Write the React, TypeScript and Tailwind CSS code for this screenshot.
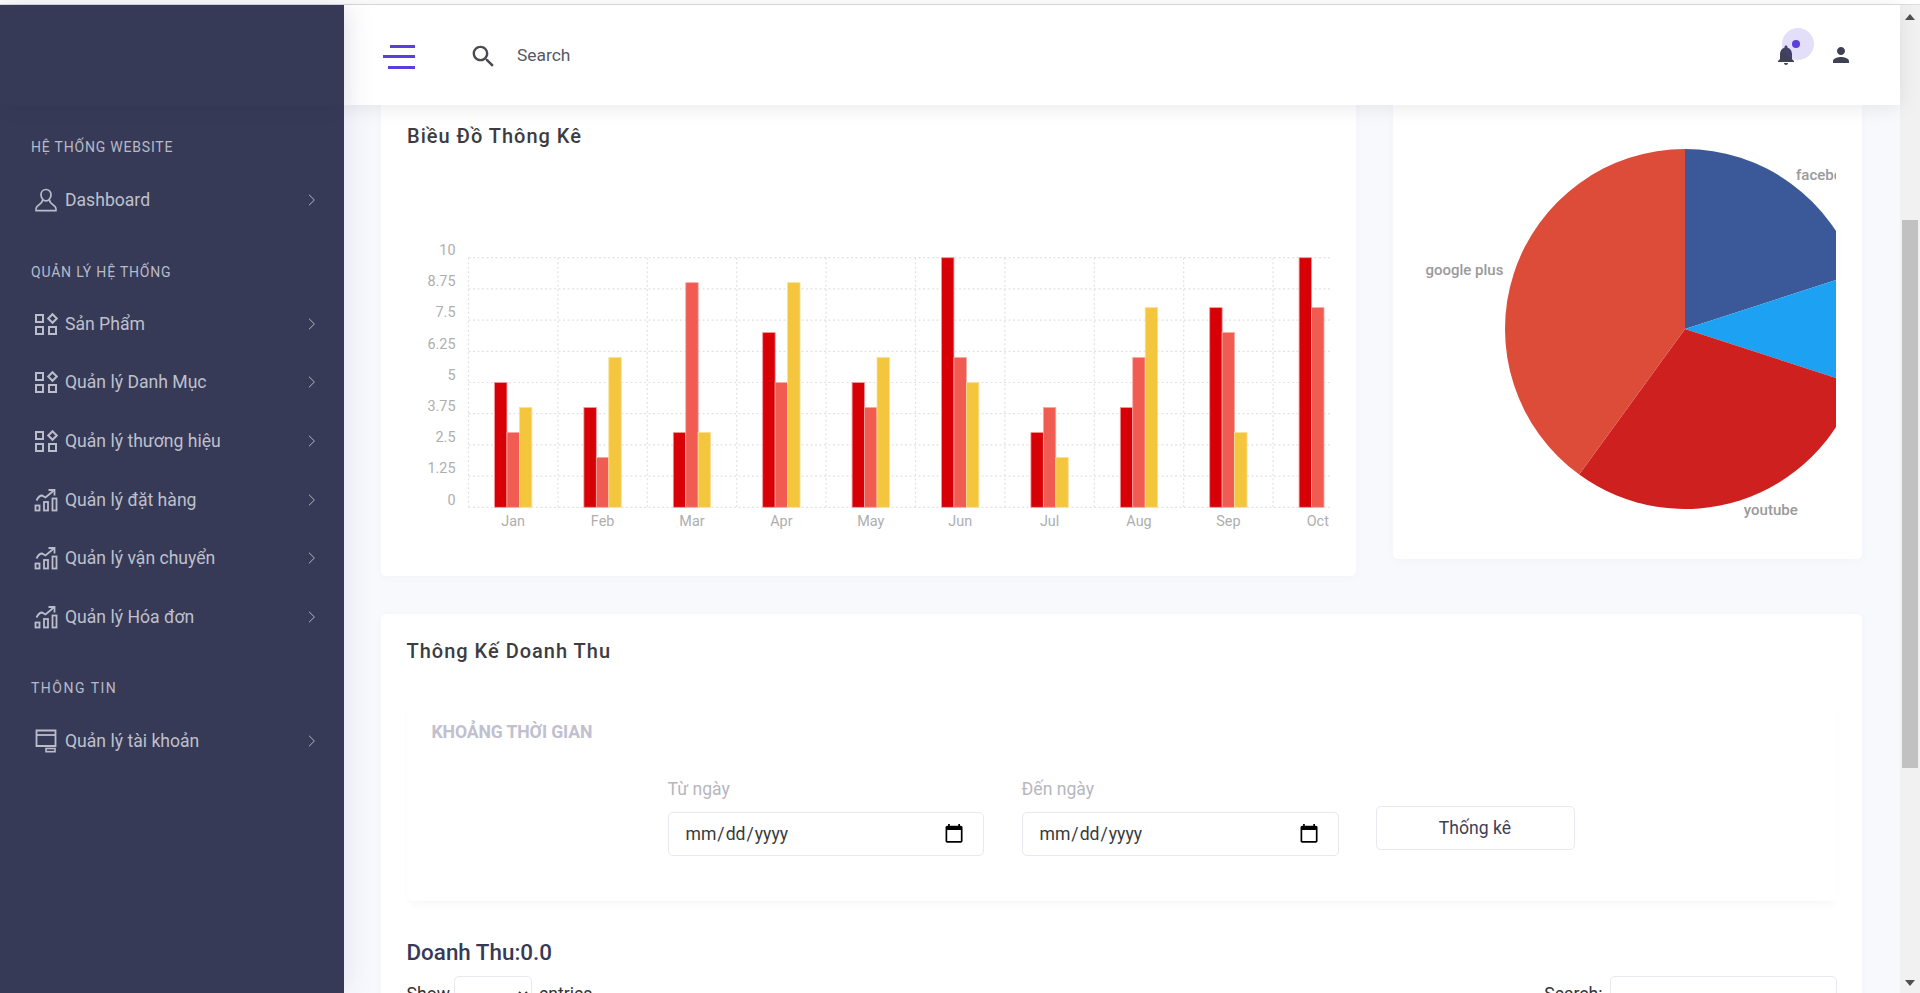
import React from "react";

const Chevron = () => (
  <svg width="8" height="14" viewBox="0 0 8 14" fill="none" stroke="#b4b5c3" strokeWidth="1" className="shrink-0">
    <path d="M1 1.7 L6.4 7 L1 12.3" />
  </svg>
);

const PersonIcon = () => (
  <svg width="24" height="24" viewBox="0 0 24 24" fill="none" stroke="#bcbdca" strokeWidth="1.7">
    <path d="M12 1.5c-3 0-5 2.3-5 5.2 0 3 2.2 6.2 5 6.2s5-3.2 5-6.2c0-2.9-2-5.2-5-5.2z" />
    <path d="M8.6 12 C8.4 15 5 16.5 3 18.5 1.8 20 1.6 21.2 2 22.6 H22 C22.4 21.2 22.2 20 21 18.5 19 16.5 15.6 15 15.4 12" />
  </svg>
);

const GridIcon = () => (
  <svg width="24" height="24" viewBox="0 0 24 24" fill="none" stroke="#bcbdca" strokeWidth="2">
    <rect x="2" y="3" width="7" height="7" />
    <rect x="2" y="15" width="7" height="7" />
    <rect x="15" y="15" width="7" height="7" />
    <path d="M18.5 2.2 L22.8 6.5 L18.5 10.8 L14.2 6.5 Z" />
  </svg>
);

const TrendIcon = () => (
  <svg width="24" height="24" viewBox="0 0 24 24" fill="none" stroke="#bcbdca" strokeWidth="1.8">
    <rect x="1.5" y="17.5" width="4" height="5" />
    <rect x="10" y="14" width="4" height="8.5" />
    <rect x="18.5" y="10.5" width="4" height="12" />
    <path d="M2.5 12.5 C4 9.5 6 7.5 8 7.5 L11.5 9.5 L19.5 2.8" />
    <path d="M14.5 2 H20.5 V7.5" />
  </svg>
);

const WindowIcon = () => (
  <svg width="24" height="24" viewBox="0 0 24 24" fill="none" stroke="#bcbdca" strokeWidth="1.8">
    <path d="M2.5 1.5 H21.5 V17 H2.5 Z" />
    <path d="M2.5 6 H21.5" />
    <rect x="12" y="19.5" width="9" height="3.2" strokeWidth="1.6" />
  </svg>
);

const SectionLabel = ({ text, className }: { text: string; className: string }) => (
  <div className={`h-5 pl-[31px] text-[14px] leading-5 text-[#b9bac7] uppercase ${className}`}>{text}</div>
);

const MenuRow = ({ icon, text }: { icon: React.ReactNode; text: string }) => (
  <div className="flex h-[58.6px] items-center pl-[34px] pr-[28px] text-[#bfc0cc]">
    <div className="flex w-[31px] shrink-0 items-center">{icon}</div>
    <div className="flex-1 text-[17.6px] leading-6">{text}</div>
    <Chevron />
  </div>
);

const Sidebar = () => (
  <aside className="z-20 h-full w-[344px] shrink-0 bg-[#363a57] shadow-[0_0_30px_rgba(60,60,120,0.12)]">
    <div className="h-[100px] shadow-[0_4px_20px_rgba(0,0,0,0.05)]" />
    <SectionLabel text="Hệ thống website" className="mt-[32px] tracking-[0.8px]" />
    <div className="mt-[14px]">
      <MenuRow icon={<PersonIcon />} text="Dashboard" />
    </div>
    <SectionLabel text="Quản lý hệ thống" className="mt-[32px] tracking-[0.8px]" />
    <div className="mt-[13px]">
      <MenuRow icon={<GridIcon />} text="Sản Phẩm" />
      <MenuRow icon={<GridIcon />} text="Quản lý Danh Mục" />
      <MenuRow icon={<GridIcon />} text="Quản lý thương hiệu" />
      <MenuRow icon={<TrendIcon />} text="Quản lý đặt hàng" />
      <MenuRow icon={<TrendIcon />} text="Quản lý vận chuyển" />
      <MenuRow icon={<TrendIcon />} text="Quản lý Hóa đơn" />
    </div>
    <SectionLabel text="Thông tin" className="mt-[32px] tracking-[1.5px]" />
    <div className="mt-[14px]">
      <MenuRow icon={<WindowIcon />} text="Quản lý tài khoản" />
    </div>
  </aside>
);

const Header = () => (
  <header className="z-10 flex h-[100px] shrink-0 items-center bg-white pl-[39px] pr-[47.5px] shadow-[0_2px_20px_rgba(0,0,0,0.09)]">
    <div className="mt-[3px] flex w-[32px] flex-col items-end gap-[7.5px]">
      <div className="h-[3px] w-[25px] bg-[#5a3fdc]" />
      <div className="h-[3px] w-[32px] bg-[#5a3fdc]" />
      <div className="h-[3px] w-[27px] bg-[#5a3fdc]" />
    </div>
    <svg width="29" height="29" viewBox="0 0 24 24" fill="#4a4a50" className="ml-[54px] mt-[3px]">
      <path d="M15.5 14h-.79l-.28-.27C15.41 12.59 16 11.11 16 9.5 16 5.91 13.09 3 9.5 3S3 5.91 3 9.5 5.91 16 9.5 16c1.61 0 3.09-.59 4.23-1.57l.27.28v.79l5 4.99L20.49 19l-4.99-5zm-6 0C7.01 14 5 11.99 5 9.5S7.01 5 9.5 5 14 7.01 14 9.5 11.99 14 9.5 14z" />
    </svg>
    <div className="ml-[19px] mt-[1px] text-[17.4px] text-[#555865]">Search</div>
    <div className="flex-1" />
    <div className="relative h-6 w-6">
      <svg width="24" height="24" viewBox="0 0 24 24" fill="#3f4254">
        <path d="M12 22c1.1 0 2-.9 2-2h-4c0 1.1.89 2 2 2zm6-6v-5c0-3.07-1.64-5.64-4.5-6.32V4c0-.83-.67-1.5-1.5-1.5s-1.5.67-1.5 1.5v.68C7.63 5.36 6 7.92 6 11v5l-2 2v1h16v-1l-2-2z" />
      </svg>
      <div className="absolute left-[8px] top-[-15px] flex h-[32px] w-[32px] items-center justify-center rounded-full bg-[#5a3fdc]/17">
        <div className="ml-[-3px] h-2 w-2 rounded-full bg-[#5a3fdc]" />
      </div>
    </div>
    <svg width="24" height="24" viewBox="0 0 24 24" fill="#3f4254" className="ml-[31px]">
      <path d="M12 12c2.21 0 4-1.79 4-4s-1.79-4-4-4-4 1.79-4 4 1.79 4 4 4zm0 2c-2.67 0-8 1.34-8 4v2h16v-2c0-2.66-5.33-4-8-4z" />
    </svg>
  </header>
);

const months = ["Jan", "Feb", "Mar", "Apr", "May", "Jun", "Jul", "Aug", "Sep", "Oct"];
const series: number[][] = [
  [5, 3, 4], [4, 2, 6], [3, 9, 3], [7, 5, 9], [5, 4, 6],
  [10, 6, 5], [3, 4, 2], [4, 6, 8], [8, 7, 3], [10, 8],
];
const barFill = ["#d60006", "#f15c52", "#f4c63d"];
const barEdge = ["#f49a9c", "#f7a9a4", "#f9e09a"];
const ticks = ["10", "8.75", "7.5", "6.25", "5", "3.75", "2.5", "1.25", "0"];
const X0 = 468.5;
const STEP = 89.4;
const TOP = 257.7;
const BOTTOM = 507.3;
const BAR = 12.45;

const BarChart = () => (
  <svg width="975" height="300" viewBox="381 240 975 300" className="mt-[92px] block" fontFamily="Roboto, sans-serif" fontSize="14.4">
    {ticks.map((t, i) => {
      const y = TOP + (i * (BOTTOM - TOP)) / 8;
      return (
        <g key={t}>
          <line x1={X0} x2={1331} y1={y} y2={y} stroke="#e2e2e2" strokeWidth="1.2" strokeDasharray="2 2.5" />
          <text x={455.5} y={y - 2.7} textAnchor="end" fill="#aeaeae">{t}</text>
        </g>
      );
    })}
    {months.map((m, i) => (
      <line key={m} x1={X0 + i * STEP} x2={X0 + i * STEP} y1={TOP} y2={BOTTOM} stroke="#e2e2e2" strokeWidth="1.2" strokeDasharray="2 2.5" />
    ))}
    {series.map((vals, i) => {
      const start = 494.5 + i * STEP;
      return (
        <g key={months[i]}>
          {vals.map((v, j) => {
            const h = (v / 10) * (BOTTOM - TOP);
            return (
              <rect key={j} x={start + j * BAR} y={BOTTOM - h} width={BAR} height={h} fill={barFill[j]} stroke={barEdge[j]} strokeWidth="0.8" />
            );
          })}
          <text x={start + 18.7} y={526} textAnchor="middle" fill="#aeaeae">{months[i]}</text>
        </g>
      );
    })}
  </svg>
);

const slices = [
  { from: -90, to: -18, fill: "#3b5998" },
  { from: -18, to: 18, fill: "#1da1f2" },
  { from: 18, to: 126, fill: "#cd201f" },
  { from: 126, to: 270, fill: "#dd4b39" },
];
const CX = 1685;
const CY = 329;
const R = 180;
const slicePath = (from: number, to: number) => {
  const a = (from * Math.PI) / 180;
  const b = (to * Math.PI) / 180;
  const large = to - from > 180 ? 1 : 0;
  return `M${CX} ${CY}L${CX + R * Math.cos(a)} ${CY + R * Math.sin(a)}A${R} ${R} 0 ${large} 1 ${CX + R * Math.cos(b)} ${CY + R * Math.sin(b)}Z`;
};

const PieChart = () => (
  <svg width="442.5" height="400" viewBox="1393 130 442.5 400" className="mt-[25px] block" fontFamily="Roboto, sans-serif" fontSize="15" fontWeight="500">
    {slices.map((s) => (
      <path key={s.fill} d={slicePath(s.from, s.to)} fill={s.fill} />
    ))}
    <text x={1796} y={180} fill="#9a9a9a">facebook</text>
    <text x={1425.5} y={275} fill="#9a9a9a">google plus</text>
    <text x={1743.8} y={515} fill="#9a9a9a">youtube</text>
  </svg>
);

const DateField = ({ label, className }: { label: string; className: string }) => (
  <div className={`shrink-0 ${className}`}>
    <div className="h-6 text-[17.6px] leading-6 text-[#b6b7c0]">{label}</div>
    <input
      type="date"
      className="mt-[11px] block h-[44px] w-full rounded-[5px] border border-[#e8e8ee] bg-white px-4 text-[17.6px] text-[#3a3a3a] [&::-webkit-calendar-picker-indicator]:mr-[2px] [&::-webkit-calendar-picker-indicator]:scale-[1.2]"
    />
  </div>
);

const Revenue = () => (
  <section className="mt-[38px] rounded-[5px] bg-white px-[25.5px] pt-[25px] pb-10 shadow-[0_2px_10px_rgba(80,80,140,0.03)]">
    <h2 className="h-6 text-[20px] font-medium leading-6 tracking-[1px] text-[#3c3c42]">Thông Kế Doanh Thu</h2>
    <div className="mt-[32px] rounded-[5px] pt-[25px] pb-[45px] shadow-[0_6px_10px_-4px_rgba(60,60,100,0.05)]">
      <div className="h-6 pl-[25px] text-[17.6px] font-bold leading-6 tracking-[-0.1px] text-[#c0c0cf]">KHOẢNG THỜI GIAN</div>
      <div className="mt-[33px] flex pl-[261px]">
        <DateField label="Từ ngày" className="w-[316px]" />
        <DateField label="Đến ngày" className="ml-[38px] w-[317px]" />
        <button className="ml-[37px] mt-[29px] h-[44px] w-[199px] rounded-[5px] border border-[#e8e8ee] bg-white text-center text-[17.6px] text-[#3c4058]">
          Thống kê
        </button>
      </div>
    </div>
    <h3 className="mt-[36px] h-[30px] text-[22.4px] font-medium leading-[30px] text-[#363a57]">Doanh Thu:0.0</h3>
    <div className="mt-[9px] flex items-start justify-between text-[17.6px] text-[#333]">
      <div className="flex items-center">
        <span>Show</span>
        <select className="ml-[4px] h-[36px] w-[78px] rounded-[5px] border border-[#e8e8ee] bg-white" />
        <span className="ml-[7px]">entries</span>
      </div>
      <div className="flex items-center">
        <span>Search:</span>
        <input className="ml-[7px] h-[36px] w-[227px] rounded-[5px] border border-[#e8e8ee] bg-white" />
      </div>
    </div>
  </section>
);

const Scrollbar = () => (
  <div className="flex w-5 shrink-0 flex-col items-center bg-[#f1f1f1]">
    <svg width="10" height="6" viewBox="0 0 10 6" fill="#505050" className="mt-[9px] shrink-0"><path d="M5 0 L10 6 H0 Z" /></svg>
    <div className="mt-[200px] h-[548px] w-[16.5px] shrink-0 bg-[#c1c1c1]" />
    <svg width="10" height="6" viewBox="0 0 10 6" fill="#505050" className="mt-[212px] shrink-0"><path d="M0 0 H10 L5 6 Z" /></svg>
  </div>
);

export default function App() {
  return (
    <div className="flex h-[993px] w-[1920px] flex-col overflow-hidden bg-white font-[Roboto,sans-serif]">
      <div className="h-[5px] shrink-0 border-b border-[#dddddd] bg-white" />
      <div className="flex min-h-0 flex-1">
        <Sidebar />
        <div className="flex min-w-0 flex-1 flex-col bg-[#f8f9fd]">
          <Header />
          <main className="min-h-0 flex-1 overflow-hidden pl-[37px] pr-[38px]">
            <div className="flex items-start gap-[37px]">
              <section className="h-[471px] w-[975px] shrink-0 rounded-b-[5px] bg-white pt-[19px] shadow-[0_2px_10px_rgba(80,80,140,0.03)]">
                <h2 className="h-6 pl-[26px] text-[20px] font-medium leading-6 tracking-[1px] text-[#3c3c42]">Biều Đồ Thông Kê</h2>
                <BarChart />
              </section>
              <section className="h-[454px] w-[468.5px] shrink-0 rounded-b-[5px] bg-white shadow-[0_2px_10px_rgba(80,80,140,0.03)]">
                <PieChart />
              </section>
            </div>
            <Revenue />
          </main>
        </div>
        <Scrollbar />
      </div>
    </div>
  );
}
